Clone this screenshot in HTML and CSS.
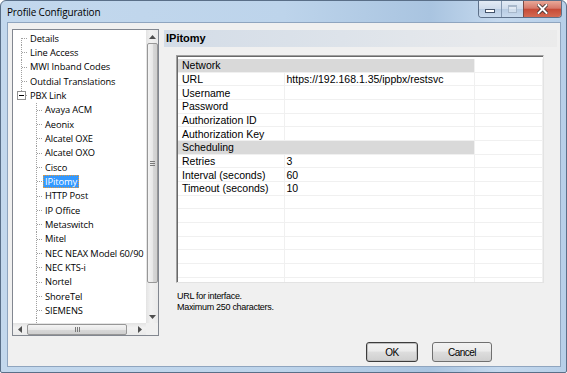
FILE: index.html
```html
<!DOCTYPE html>
<html lang="en">
<head>
  <meta charset="UTF-8" />
  <title>Profile Configuration</title>
  <link rel="stylesheet" href="styles.css">
</head>
<body>
  <div class="window">
    <div class="titlebar">
      <span class="title">Profile Configuration</span>
      <div class="caption">
        <span class="cap-btn cap-min"><i></i></span>
        <span class="cap-btn cap-max"><i></i></span>
        <span class="cap-btn cap-close">
          <svg width="11" height="10" viewBox="0 0 11 10">
            <path d="M1.5 1 L9.5 9 M9.5 1 L1.5 9" stroke="#3b2a28" stroke-width="3.6" stroke-linecap="square" />
            <path d="M1.5 1 L9.5 9 M9.5 1 L1.5 9" stroke="#ffffff" stroke-width="2" stroke-linecap="square" />
          </svg>
        </span>
      </div>
    </div>

    <div class="client">
      <div class="main">
        <div class="tree">
          <div class="tree-view">
            <ul class="tree-items">
              <li class="node l1 first"><span class="label">Details</span></li>
              <li class="node l1"><span class="label">Line Access</span></li>
              <li class="node l1"><span class="label">MWI Inband Codes</span></li>
              <li class="node l1"><span class="label">Outdial Translations</span></li>
              <li class="node l1 last has-kids"><span class="expander"><i></i></span><span class="label">PBX Link</span></li>
              <li class="node l2"><span class="label">Avaya ACM</span></li>
              <li class="node l2"><span class="label">Aeonix</span></li>
              <li class="node l2"><span class="label">Alcatel OXE</span></li>
              <li class="node l2"><span class="label">Alcatel OXO</span></li>
              <li class="node l2"><span class="label">Cisco</span></li>
              <li class="node l2"><span class="label selected">IPitomy</span></li>
              <li class="node l2"><span class="label">HTTP Post</span></li>
              <li class="node l2"><span class="label">IP Office</span></li>
              <li class="node l2"><span class="label">Metaswitch</span></li>
              <li class="node l2"><span class="label">Mitel</span></li>
              <li class="node l2"><span class="label">NEC NEAX Model 60/90</span></li>
              <li class="node l2"><span class="label">NEC KTS-i</span></li>
              <li class="node l2"><span class="label">Nortel</span></li>
              <li class="node l2"><span class="label">ShoreTel</span></li>
              <li class="node l2"><span class="label">SIEMENS</span></li>
              <li class="node l2 more"></li>
            </ul>
            <div class="vscroll">
              <span class="sb-btn">
                <svg width="7" height="4" viewBox="0 0 7 4"><polygon points="0,4 3.5,0 7,4" fill="#4f4f4f" /></svg>
              </span>
              <div class="sb-track">
                <div class="thumb thumb-v"><i></i><i></i><i></i></div>
              </div>
              <span class="sb-btn">
                <svg width="7" height="4" viewBox="0 0 7 4"><polygon points="0,0 3.5,4 7,0" fill="#4f4f4f" /></svg>
              </span>
            </div>
          </div>
          <div class="hscroll-row">
            <div class="hscroll">
              <span class="sb-btn">
                <svg width="4" height="7" viewBox="0 0 4 7"><polygon points="4,0 0,3.5 4,7" fill="#4f4f4f" /></svg>
              </span>
              <div class="sb-track sb-track-h">
                <div class="thumb thumb-h"><i></i><i></i><i></i></div>
              </div>
              <span class="sb-btn">
                <svg width="4" height="7" viewBox="0 0 4 7"><polygon points="0,0 4,3.5 0,7" fill="#4f4f4f" /></svg>
              </span>
            </div>
            <div class="corner"></div>
          </div>
        </div>

        <div class="panel">
          <div class="panel-head">IPitomy</div>
          <div class="grid">
            <table class="props">
              <colgroup>
                <col class="col-name">
                <col class="col-value">
                <col>
              </colgroup>
              <tr class="cat"><td colspan="2">Network</td><td></td></tr>
              <tr><td>URL</td><td>https://192.168.1.35/ippbx/restsvc</td><td></td></tr>
              <tr><td>Username</td><td></td><td></td></tr>
              <tr><td>Password</td><td></td><td></td></tr>
              <tr><td>Authorization ID</td><td></td><td></td></tr>
              <tr><td>Authorization Key</td><td></td><td></td></tr>
              <tr class="cat"><td colspan="2">Scheduling</td><td></td></tr>
              <tr><td>Retries</td><td>3</td><td></td></tr>
              <tr><td>Interval (seconds)</td><td>60</td><td></td></tr>
              <tr><td>Timeout (seconds)</td><td>10</td><td></td></tr>
              <tr><td></td><td></td><td></td></tr>
              <tr><td></td><td></td><td></td></tr>
              <tr><td></td><td></td><td></td></tr>
              <tr><td></td><td></td><td></td></tr>
              <tr><td></td><td></td><td></td></tr>
              <tr><td></td><td></td><td></td></tr>
              <tr><td></td><td></td><td></td></tr>
            </table>
          </div>
          <p class="help">URL for interface.<br>Maximum 250 characters.</p>
        </div>
      </div>

      <div class="buttons">
        <button class="btn btn-ok">OK</button>
        <button class="btn btn-cancel">Cancel</button>
      </div>
    </div>
  </div>
</body>
</html>
```

FILE: styles.css
```css
body {
  margin: 0;
  background: #ffffff;
  font-family: "Liberation Sans", Arial, sans-serif;
  color: #000000;
}

/* window frame */

.window {
  width: 567px;
  height: 373px;
  box-sizing: border-box;
  border: 1px solid #5a6f88;
  border-radius: 6px 6px 2px 2px;
  background: linear-gradient(to right, #c3d8ed 0%, #bdd4eb 50%, #a9c4e0 76%, #c5d9ee 88%, #b7cfe8 100%);
  display: flex;
  flex-direction: column;
  overflow: hidden;
}

.titlebar {
  height: 21px;
  display: flex;
  align-items: flex-start;
}

.title {
  font-family: "Open Sans", "Noto Sans", sans-serif;
  font-size: 10px;
  letter-spacing: -0.15px;
  line-height: 16px;
  padding: 3px 0 0 6px;
}

.caption {
  display: flex;
  height: 17px;
  margin: 0 4px 0 auto;
  box-sizing: border-box;
  border: 1px solid #5d7089;
  border-top: none;
  border-radius: 0 0 4px 4px;
  overflow: hidden;
}

.cap-btn {
  display: flex;
  justify-content: center;
  background: linear-gradient(#e2ebf5, #cfdcec 48%, #b7cbe2 52%, #c9daed);
}

.cap-min {
  width: 22px;
}

.cap-min i {
  width: 8px;
  height: 2px;
  margin-top: 8px;
  background: #ffffff;
  border: 1px solid #43536a;
}

.cap-max {
  width: 21px;
  border-left: 1px solid #8397b0;
}

.cap-max i {
  width: 7px;
  height: 5px;
  margin-top: 4px;
  border: 1px solid #a8b8cb;
  border-top-width: 2px;
  background: rgba(255, 255, 255, 0.35);
}

.cap-close {
  width: 37px;
  border-left: 1px solid #7d4a44;
  background: linear-gradient(#e9a898, #d6796a 45%, #c64b37 52%, #d46a52);
  align-items: center;
}

/* client area */

.client {
  flex: 1;
  margin: 0 5px 5px 6px;
  border: 1px solid #8fa5bf;
  background: #f0f0f0;
  padding: 6px 3px 0 4px;
  display: flex;
  flex-direction: column;
}

.main {
  display: flex;
  gap: 5px;
}

/* tree */

.tree {
  width: 147px;
  height: 307px;
  box-sizing: border-box;
  border: 1px solid #828790;
  background: #ffffff;
  display: flex;
  flex-direction: column;
}

.tree-view {
  flex: 1;
  min-height: 0;
  display: flex;
}

.tree-items {
  flex: 1;
  min-width: 0;
  margin: 0;
  padding: 1px 0 0;
  list-style: none;
  overflow: hidden;
  font-family: "Open Sans", "Noto Sans", sans-serif;
  font-size: 9.3px;
  letter-spacing: -0.1px;
  white-space: nowrap;
}

.node {
  height: 14.33px;
  display: flex;
  align-items: center;
  background-repeat: no-repeat;
}

.node.l1 {
  padding-left: 15px;
  background-image:
    repeating-linear-gradient(to bottom, #a0a0a0 0 1px, transparent 1px 2px),
    repeating-linear-gradient(to right, #a0a0a0 0 1px, transparent 1px 2px);
  background-position: 8px 0, 9px 7px;
  background-size: 1px 100%, 6px 1px;
}

.node.l1.first {
  background-position: 8px 7px, 9px 7px;
}

.node.l1.last {
  background-size: 1px 7px, 6px 1px;
}

.node.has-kids {
  padding-left: 4px;
}

.node.l2 {
  padding-left: 30px;
  background-image:
    repeating-linear-gradient(to bottom, #a0a0a0 0 1px, transparent 1px 2px),
    repeating-linear-gradient(to right, #a0a0a0 0 1px, transparent 1px 2px);
  background-position: 23px 0, 24px 7px;
  background-size: 1px 100%, 6px 1px;
}

.node.more {
  background-size: 1px 100%, 0 0;
}

.expander {
  width: 9px;
  height: 9px;
  box-sizing: border-box;
  margin-right: 2px;
  border: 1px solid #919191;
  background: #ffffff;
  display: flex;
  align-items: center;
  justify-content: center;
}

.expander i {
  width: 5px;
  height: 1px;
  background: #000000;
}

.label {
  height: 13px;
  line-height: 13px;
  padding: 0 2px;
  box-sizing: border-box;
}

.label.selected {
  background: #3399ff;
  color: #ffffff;
  border: 1px dotted #e59a3a;
  padding: 0 1px;
  line-height: 11px;
}

/* scrollbars */

.vscroll {
  width: 12px;
  display: flex;
  flex-direction: column;
  background: linear-gradient(to right, #e3e3e3, #f2f2f2 40%, #eaeaea);
}

.sb-btn {
  flex: none;
  width: 12px;
  height: 13px;
  display: flex;
  align-items: center;
  justify-content: center;
}

.sb-track {
  flex: 1;
  display: flex;
  flex-direction: column;
}

.thumb {
  box-sizing: border-box;
  border: 1px solid #979797;
  border-radius: 2px;
  display: flex;
  align-items: center;
  justify-content: center;
  gap: 1px;
}

.thumb-v {
  height: 240px;
  width: 11px;
  margin-left: 1px;
  flex-direction: column;
  background: linear-gradient(to right, #f4f4f4, #e8e8e8 50%, #d8d8d8 52%, #cfcfcf);
}

.thumb-v i {
  width: 5px;
  height: 1px;
  background: #7a7a7a;
}

.hscroll-row {
  height: 12px;
  display: flex;
}

.hscroll {
  flex: 1;
  display: flex;
  background: linear-gradient(#e3e3e3, #f2f2f2 40%, #eaeaea);
}

.hscroll .sb-btn {
  width: 13px;
  height: 12px;
}

.sb-track-h {
  flex-direction: row;
  padding-left: 1px;
}

.thumb-h {
  width: 100px;
  height: 11px;
  margin-top: 1px;
  background: linear-gradient(#f4f4f4, #e8e8e8 50%, #d8d8d8 52%, #cfcfcf);
}

.thumb-h i {
  width: 1px;
  height: 5px;
  background: #7a7a7a;
}

.corner {
  width: 12px;
  background: #f0f0f0;
}

/* properties panel */

.panel {
  flex: 1;
  min-width: 0;
  padding-top: 1px;
  display: flex;
  flex-direction: column;
}

.panel-head {
  height: 17px;
  line-height: 17px;
  padding-left: 2px;
  font-size: 11px;
  font-weight: bold;
  background: linear-gradient(to right, #d3dce7, #dde3ea 45%, #e7e9ec 80%, #ebebeb);
}

.grid {
  height: 228px;
  margin: 8px 13px 0 12px;
  box-sizing: border-box;
  border: 1px solid;
  border-color: #a0a0a0 #e3e3e3 #e3e3e3 #a0a0a0;
  box-shadow: inset 1px 1px 0 #696969;
  background: #ffffff;
  padding: 3px 0 0 1px;
  overflow: hidden;
}

.props {
  width: 100%;
  table-layout: fixed;
  border-collapse: collapse;
  font-size: 10.5px;
}

.col-name {
  width: 106px;
}

.col-value {
  width: 190px;
}

.props td {
  height: 12.67px;
  padding: 0 0 0 4px;
  line-height: 12px;
  border-right: 1px solid #f0f0f0;
  border-bottom: 1px solid #f0f0f0;
  white-space: nowrap;
  overflow: hidden;
}

.props td + td {
  padding-left: 2px;
}

.props .cat td:first-child {
  background: #d9d9d9;
}

.help {
  margin: 8px 0 0 13px;
  font-size: 9px;
  letter-spacing: -0.3px;
  line-height: 10.6px;
}

/* dialog buttons */

.buttons {
  display: flex;
  justify-content: flex-end;
  gap: 14px;
  margin-top: 6px;
  padding-right: 65px;
}

.btn {
  height: 20px;
  padding: 0;
  box-sizing: border-box;
  border: 1px solid #707070;
  border-radius: 3px;
  background: linear-gradient(#f2f2f2, #ebebeb 45%, #dddddd 50%, #cfcfcf);
  font-family: "Liberation Sans", Arial, sans-serif;
  font-size: 10px;
  letter-spacing: -0.5px;
  color: #000000;
}

.btn-ok {
  width: 52px;
  border-color: #3c3c3c;
  box-shadow: inset 0 0 0 1px #bdbdbd;
}

.btn-cancel {
  width: 60px;
}
```
